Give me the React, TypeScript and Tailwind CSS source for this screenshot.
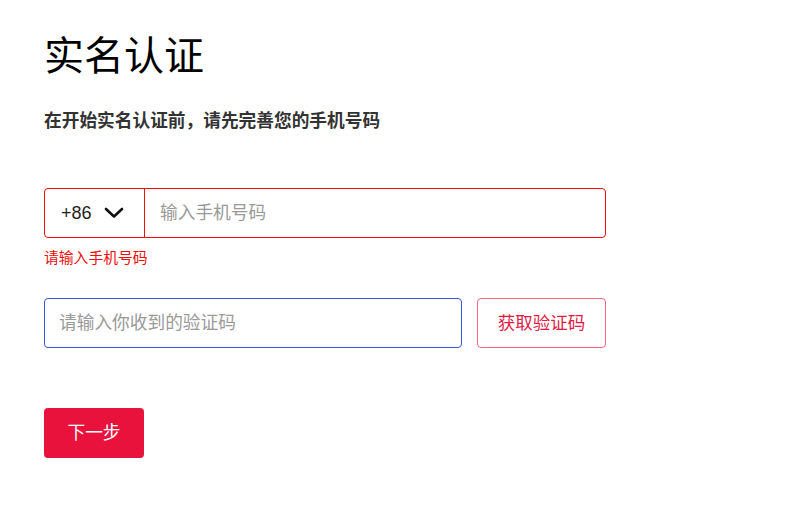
import { useState } from "react";

export default function App() {
  const [phone, setPhone] = useState("");
  const [code, setCode] = useState("");

  return (
    <div
      className="min-h-screen bg-white pl-[44px] pt-[26px]"
      style={{ fontFamily: '"Liberation Sans", "Noto Sans CJK SC", sans-serif' }}
    >
      <h1 className="text-[40px] leading-[60px] text-black">实名认证</h1>
      <p className="mt-[22px] text-[17.7px] leading-[26px] font-bold text-[#333]">
        在开始实名认证前，请先完善您的手机号码
      </p>

      <div className="mt-[54px] w-[562px]">
        <div className="flex h-[50px] rounded border border-[#f20d0d]">
          <button className="flex w-[100px] shrink-0 items-center gap-[12px] border-r border-[#f20d0d] pl-[16px] text-[18px] text-[#222]">
            <span>+86</span>
            <svg width="20" height="12" viewBox="0 0 20 12" fill="none">
              <path d="M2 2l8 7.5L18 2" stroke="#111" strokeWidth="2.6" strokeLinecap="round" strokeLinejoin="round" />
            </svg>
          </button>
          <input
            value={phone}
            onChange={(e) => setPhone(e.target.value)}
            placeholder="输入手机号码"
            className="min-w-0 flex-1 rounded-r bg-transparent pl-[15px] text-[17.7px] text-[#333] outline-none placeholder:text-[#999]"
          />
        </div>
        <p className="mt-[10px] text-[14.8px] leading-[20px] text-[#f20d0d]">请输入手机号码</p>

        <div className="mt-[30px] flex gap-[15px]">
          <input
            value={code}
            onChange={(e) => setCode(e.target.value)}
            placeholder="请输入你收到的验证码"
            className="h-[50px] min-w-0 flex-1 rounded border border-[#3c55d6] pl-[14px] text-[17.7px] text-[#333] outline-none placeholder:text-[#999]"
          />
          <button className="h-[50px] w-[129px] rounded border border-[#f5677f] text-[17.5px] text-[#e01b45]">
            获取验证码
          </button>
        </div>

        <button className="mt-[60px] h-[50px] w-[100px] rounded bg-[#e8123d] text-[17.7px] text-white">
          下一步
        </button>
      </div>
    </div>
  );
}
